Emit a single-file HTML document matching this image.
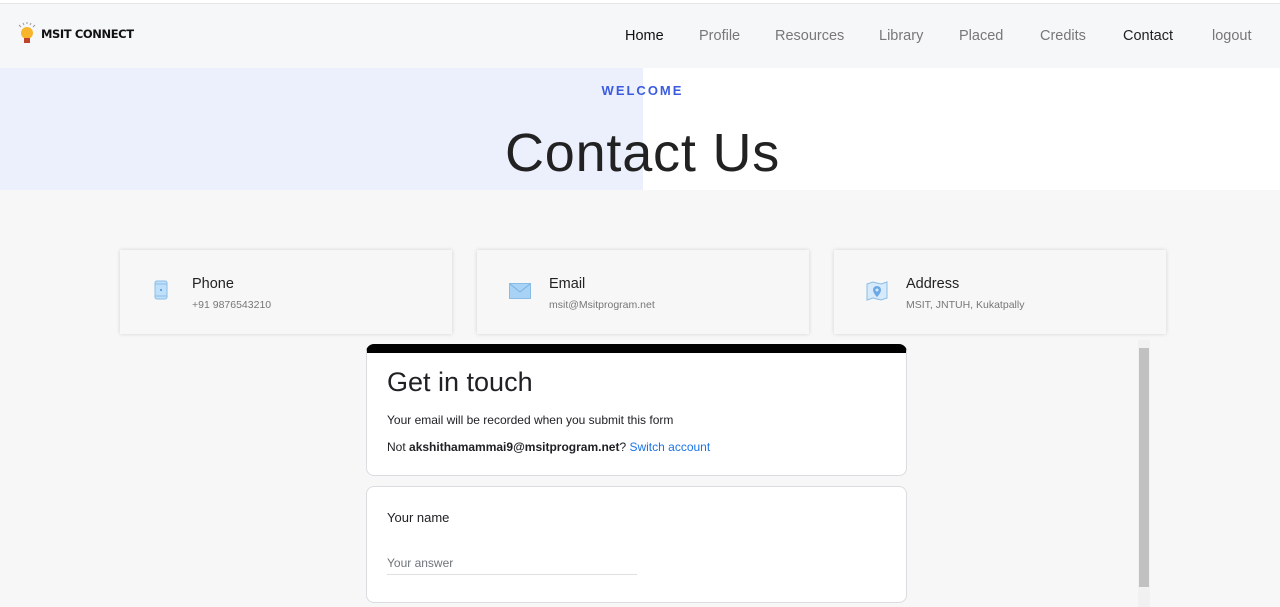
<!DOCTYPE html>
<html><head><meta charset="utf-8">
<style>
*{margin:0;padding:0;box-sizing:border-box}
body{width:1280px;height:607px;overflow:hidden;background:#f7f7f7;font-family:"Liberation Sans",sans-serif;position:relative}
.top{position:absolute;left:0;top:0;width:1280px;height:4px;background:#fff;border-bottom:1px solid #e6e6e6}
.nav{position:absolute;left:0;top:4px;width:1280px;height:64px;background:#f6f7f9}
.logo{position:absolute;left:16px;top:18px;display:flex;align-items:center}
.logo b{font-family:"DejaVu Sans","Liberation Sans",sans-serif;font-weight:900;font-size:11.5px;color:#111;margin-left:3px;letter-spacing:-0.4px}
.nav a{position:absolute;top:24px;font-size:14.5px;color:#777;text-decoration:none}
.hero{position:absolute;left:0;top:68px;width:1280px;height:122px;background:#fff}
.hero .l{position:absolute;left:0;top:0;width:643px;height:122px;background:#ecf0fd}
.welcome{position:absolute;left:0;width:1285px;text-align:center;top:15px;font-size:13px;font-weight:bold;letter-spacing:2px;color:#3b5ce0}
.h1{position:absolute;left:0;width:1285px;text-align:center;top:54px;font-size:54px;color:#222;letter-spacing:0.8px}
.card{position:absolute;top:250px;width:332px;height:84px;background:#f7f7f7;box-shadow:0 0 4px rgba(0,0,0,.15)}
.card svg{position:absolute;left:34px;top:30px}
.card .t{position:absolute;left:72px;top:26px;font-size:14.5px;color:#222}
.card .s{position:absolute;left:72px;top:49px;font-size:10.5px;color:#777}
.f{position:absolute;left:366px;width:541px;background:#fff;border:1px solid #dadce0;border-radius:8px}
.sb{position:absolute;left:1138px;top:340px;width:12px;height:267px;background:#f1f1f1}
.sb i{position:absolute;left:1px;top:8px;width:10px;height:239px;background:#c1c1c1}
</style></head><body>
<div class="top"></div>
<div class="nav">
 <div class="logo">
  <svg width="22" height="24" viewBox="0 0 22 24"><g stroke="#999" stroke-width="1"><line x1="3" y1="3" x2="5" y2="5"/><line x1="11" y1="0" x2="11" y2="2"/><line x1="19" y1="3" x2="17" y2="5"/><line x1="7" y1="1" x2="8" y2="3"/><line x1="15" y1="1" x2="14" y2="3"/></g><circle cx="11" cy="11" r="6" fill="#f7b52c"/><rect x="8" y="16" width="6" height="5" fill="#c0442c"/></svg>
  <b>MSIT CONNECT</b>
 </div>
 <a style="left:625px;color:#111">Home</a>
 <a style="left:699px">Profile</a>
 <a style="left:775px">Resources</a>
 <a style="left:879px">Library</a>
 <a style="left:959px">Placed</a>
 <a style="left:1040px">Credits</a>
 <a style="left:1123px;color:#222">Contact</a>
 <a style="left:1212px">logout</a>
</div>
<div class="hero"><div class="l"></div>
 <div class="welcome">WELCOME</div>
 <div class="h1">Contact Us</div>
</div>
<div class="card" style="left:120px">
 <svg width="14" height="20" viewBox="0 0 14 20"><rect x="1" y="1" width="12" height="18" rx="2" fill="#bfe0fb" stroke="#8bbce6"/><line x1="1" y1="4" x2="13" y2="4" stroke="#8bbce6"/><line x1="1" y1="16" x2="13" y2="16" stroke="#8bbce6"/><circle cx="7" cy="10" r="1" fill="#4a90d9"/></svg>
 <div class="t">Phone</div><div class="s">+91 9876543210</div>
</div>
<div class="card" style="left:477px">
 <svg width="22" height="16" viewBox="0 0 22 16" style="left:32px;top:33px"><rect x="0.5" y="0.5" width="21" height="15" fill="#a8d3f7" stroke="#8bbce6"/><path d="M1 1 L11 9 L21 1" fill="none" stroke="#7db1e0"/></svg>
 <div class="t">Email</div><div class="s">msit@Msitprogram.net</div>
</div>
<div class="card" style="left:834px">
 <svg width="22" height="20" viewBox="0 0 22 20" style="left:32px;top:31px"><path d="M1 3 L7 1 L15 3 L21 1 L21 17 L15 19 L7 17 L1 19 Z" fill="#d6eafb" stroke="#8bbce6"/><path d="M11 5 a4 4 0 0 1 4 4 c0 3 -4 7 -4 7 c0 0 -4 -4 -4 -7 a4 4 0 0 1 4 -4z" fill="#6aa8e6"/><circle cx="11" cy="9" r="1.5" fill="#d6eafb"/></svg>
 <div class="t">Address</div><div class="s">MSIT, JNTUH, Kukatpally</div>
</div>
<div class="f" style="top:344px;height:132px;border-top:9px solid #000">
 <div style="position:absolute;left:20px;top:14px;font-size:27px;color:#202124">Get in touch</div>
 <div style="position:absolute;left:20px;top:60px;font-size:12px;color:#202124">Your email will be recorded when you submit this form</div>
 <div style="position:absolute;left:20px;top:87px;font-size:12px;color:#202124">Not <b>akshithamammai9@msitprogram.net</b>? <span style="color:#1a73e8">Switch account</span></div>
</div>
<div class="f" style="top:486px;height:117px">
 <div style="position:absolute;left:20px;top:23px;font-size:13px;color:#202124">Your name</div>
 <div style="position:absolute;left:20px;top:69px;font-size:12px;color:#70757a">Your answer</div>
 <div style="position:absolute;left:20px;top:87px;width:250px;height:1px;background:#e0e0e0"></div>
</div>
<div class="sb"><i></i></div>
</body></html>
